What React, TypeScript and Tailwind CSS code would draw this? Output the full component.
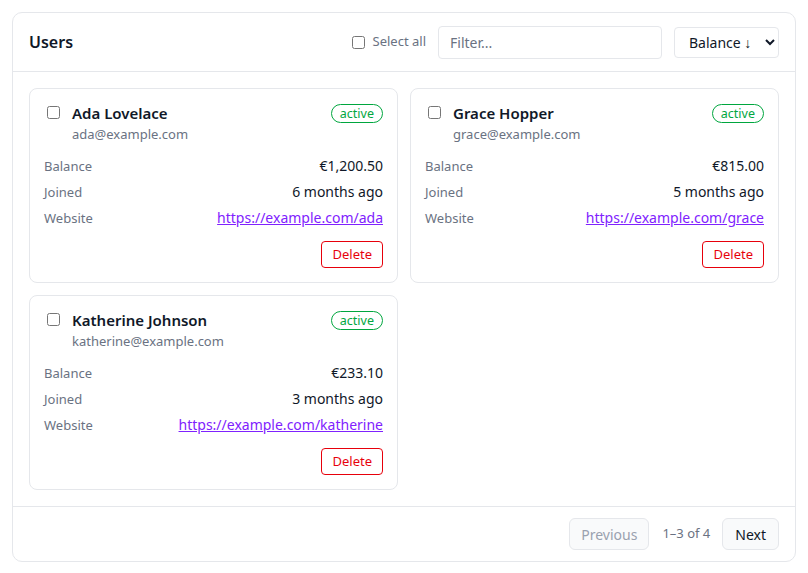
import React, { useState } from "react";

interface User {
  id: number;
  name: string;
  email: string;
  balance: string;
  joined: string;
  website: string;
  status: string;
}

const USERS: User[] = [
  { id: 1, name: "Ada Lovelace", email: "ada@example.com", balance: "€1,200.50", joined: "6 months ago", website: "https://example.com/ada", status: "active" },
  { id: 2, name: "Grace Hopper", email: "grace@example.com", balance: "€815.00", joined: "5 months ago", website: "https://example.com/grace", status: "active" },
  { id: 3, name: "Katherine Johnson", email: "katherine@example.com", balance: "€233.10", joined: "3 months ago", website: "https://example.com/katherine", status: "active" },
];

function UserCard({ user }: { user: User }) {
  return (
    <div className="rounded-lg border border-gray-200 bg-white p-[14px]">
      <div className="flex items-start justify-between">
        <div className="flex items-start gap-[12px] pl-[3px]">
          <input type="checkbox" className="mt-[3px] h-[13px] w-[13px]" />
          <div>
            <div className="text-[15px] font-semibold leading-[20px] text-gray-900">{user.name}</div>
            <div className="mt-[1px] text-[13px] leading-[20px] text-gray-500">{user.email}</div>
          </div>
        </div>
        <span className="mt-[1px] rounded-full border border-green-600 px-[8px] text-[12.5px] leading-[17px] text-green-600">
          {user.status}
        </span>
      </div>
      <div className="mt-[9px] flex flex-col">
        <div className="flex items-baseline justify-between leading-[26px]">
          <span className="text-[13px] text-gray-500">Balance</span>
          <span className="text-[14px] text-gray-900">{user.balance}</span>
        </div>
        <div className="flex items-baseline justify-between leading-[26px]">
          <span className="text-[13px] text-gray-500">Joined</span>
          <span className="text-[14px] text-gray-900">{user.joined}</span>
        </div>
        <div className="flex items-baseline justify-between leading-[26px]">
          <span className="text-[13px] text-gray-500">Website</span>
          <a href="#" className="text-[14px] text-violet-600 underline">{user.website}</a>
        </div>
      </div>
      <div className="mt-[10px] flex justify-end">
        <button className="h-[27px] rounded border border-red-600 bg-white px-[10px] text-[13px] text-red-600">
          Delete
        </button>
      </div>
    </div>
  );
}

export default function App() {
  const [filter, setFilter] = useState("");

  return (
    <div className="min-h-screen bg-white p-[12px] font-['Noto_Sans',sans-serif]">
      <div className="rounded-[10px] border border-gray-200 bg-white">
        <div className="flex h-[59px] items-center justify-between border-b border-gray-200 px-[16px]">
          <h1 className="text-[16px] font-semibold text-gray-900">Users</h1>
          <div className="flex items-center">
            <label className="flex items-center gap-[8px] text-[13px] text-gray-500">
              <input type="checkbox" className="h-[13px] w-[13px]" />
              Select all
            </label>
            <input
              value={filter}
              onChange={(e) => setFilter(e.target.value)}
              placeholder="Filter..."
              className="ml-[12px] h-[33px] w-[224px] rounded border border-gray-200 px-[11px] text-[14px] text-gray-900 placeholder:text-gray-500 outline-none"
            />
            <select className="ml-[12px] h-[31px] w-[105px] rounded border border-gray-200 bg-white px-[10px] text-[14px] text-gray-900">
              <option>Balance ↓</option>
              <option>Balance ↑</option>
              <option>Name</option>
            </select>
          </div>
        </div>

        <div className="grid grid-cols-2 items-start gap-[12px] p-[16px]">
          {USERS.map((user) => (
            <UserCard key={user.id} user={user} />
          ))}
        </div>

        <div className="flex items-center justify-end border-t border-gray-200 px-[16px] py-[11px]">
          <button disabled className="h-[32px] rounded-md border border-gray-200 bg-gray-50 px-[11px] text-[14px] text-gray-400">
            Previous
          </button>
          <span className="ml-[13px] text-[13px] text-gray-500">1–3 of 4</span>
          <button className="ml-[12px] h-[32px] rounded-md border border-gray-200 bg-gray-50 px-[12px] text-[14px] text-gray-900">
            Next
          </button>
        </div>
      </div>
    </div>
  );
}
